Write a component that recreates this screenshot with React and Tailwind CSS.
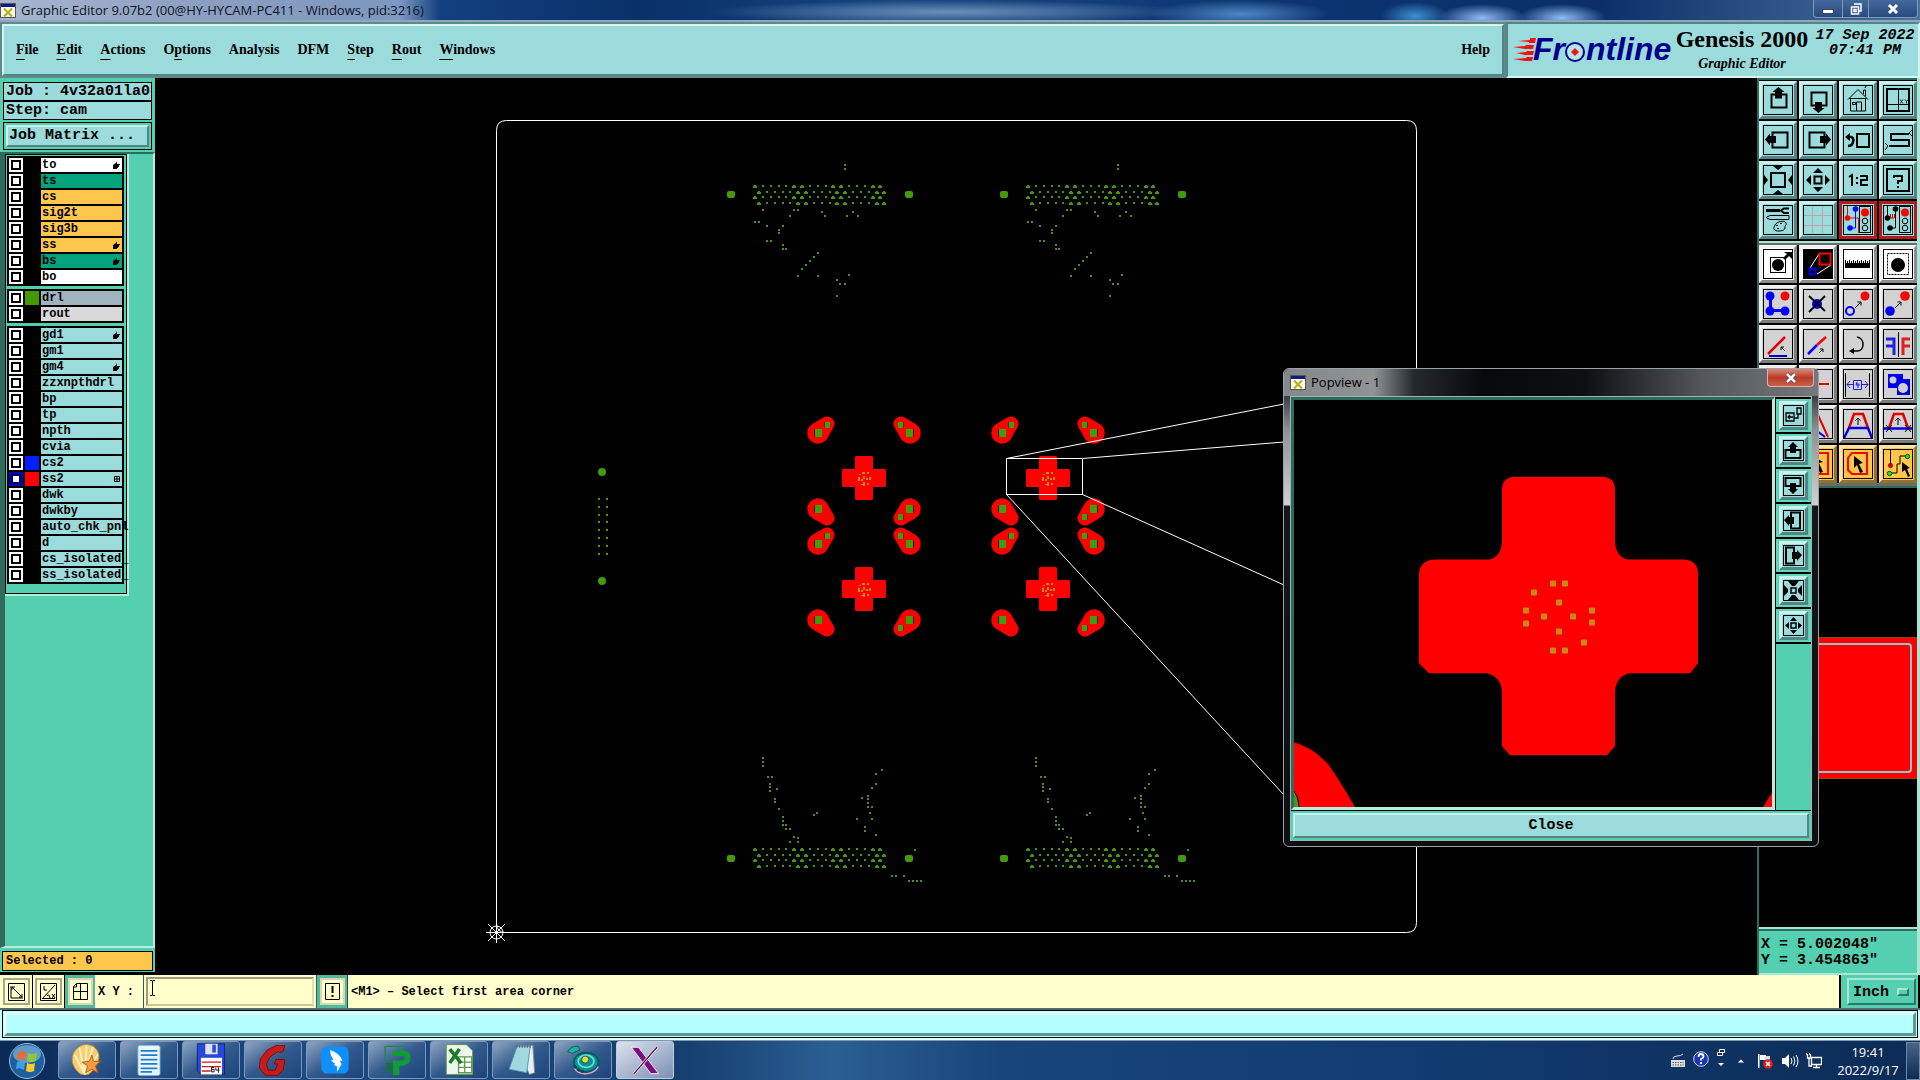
import React from "react";

const MONO = "font-['Liberation_Mono',monospace] font-bold";
const SERIF = "font-['Liberation_Serif',serif] font-bold";
const UI = "font-['Open_Sans',sans-serif]";

/* ---------- toolbar glyphs, drawn on a 30 x 30 grid ---------- */

const ICONS = {
  panUp: (
    <>
      <rect x="8.500" y="9.500" width="15" height="13" fill="none" stroke="#000" strokeWidth="2" />
      <path d="M15.500 2l6 5h-2.500v6.500h-7V7H9.500z" />
    </>
  ),
  panDown: (
    <>
      <rect x="8.500" y="7.500" width="15" height="13" fill="none" stroke="#000" strokeWidth="2" />
      <path d="M15.500 28l6-5h-2.500v-6h-7v6H9.500z" />
    </>
  ),
  home: (
    <g fill="none" stroke="#000">
      <path d="M5 14.500L15 4.500l10 10M7.500 13v13h15V13M6.500 13.500h17M13.500 26v-9h5v9M9.500 17.500h3v2h-3zM20.500 9V5h2v6M22 3l1-2" />
    </g>
  ),
  gridXY: (
    <>
      <rect x="4" y="4" width="22" height="22" fill="none" stroke="#000" strokeWidth="2" />
      <path d="M15.500 4v22M4 19.500h22" stroke="#000" />
      <path d="M17 14.500l3 4m0-4l-3 4M22 14.500l1.500 2 1.500-2m-1.500 2v2" fill="none" stroke="#000" strokeWidth=".8" />
    </>
  ),
  panLeft: (
    <>
      <rect x="9.500" y="7.500" width="15" height="15" fill="none" stroke="#000" strokeWidth="2" />
      <path d="M2 14.500l5-6v2.500h6v7H7v2.500z" />
    </>
  ),
  panRight: (
    <>
      <rect x="6.500" y="7.500" width="15" height="15" fill="none" stroke="#000" strokeWidth="2" />
      <path d="M28 14.500l-5-6v2.500h-6v7h6v2.500z" />
    </>
  ),
  previous: (
    <>
      <rect x="14" y="9" width="12" height="13" fill="none" stroke="#000" strokeWidth="2" />
      <path d="M5 12c5-1 6 2 5 5-.5 3-3 4-5 4" fill="none" stroke="#000" strokeWidth="2.500" />
      <path d="M2 12l5-4v8z" />
    </>
  ),
  serpentine: (
    <>
      <path d="M26 8H8v6h18v6H6" fill="none" stroke="#000" strokeWidth="2" transform="translate(0 1)" />
      <path d="M29 5l-3 3 3 3M2 18l3 3-3 4" fill="none" stroke="#000" />
    </>
  ),
  zoomOut: (
    <>
      <rect x="8" y="8" width="14" height="14" fill="none" stroke="#000" strokeWidth="2" />
      <path d="M10 1h10l-5 4zM10 29h10l-5-4zM1 10v10l4-5zM29 10v10l-4-5z" />
    </>
  ),
  zoomIn: (
    <>
      <rect x="11.500" y="11.500" width="7" height="7" fill="none" stroke="#000" strokeWidth="2" />
      <path d="M10 8h10l-5-5zM10 22h10l-5 5zM8 10v10l-5-5zM22 10v10l5-5z" />
    </>
  ),
  ratio: (
    <path d="M6 12l3-2v11M14 12v2m0 3v2M17 11h7v4h-6v5h7" fill="none" stroke="#000" strokeWidth="2" />
  ),
  help: (
    <>
      <rect x="4" y="4" width="22" height="22" fill="none" stroke="#000" strokeWidth="2" />
      <path d="M11 13v-2h8v5h-4v3m0 2v2" fill="none" stroke="#000" strokeWidth="2" />
    </>
  ),
  tools: (
    <>
      <path d="M3 4h14v3H3z" />
      <path d="M26 3.500h-5l-3 2 3 2.500h5" fill="none" stroke="#000" strokeWidth="2" />
      <path d="M3 12.500l4-2h19v4H7zM12 20c2-4 10-5 11-2 1 2-2 3-1 5 0 3-8 4-10 2-2-1-1-3 0-5z" fill="none" stroke="#000" />
      <path d="M13 20h2v1h-2zM17 18h2v1h-2zM14 23h2v1h-2z" />
    </>
  ),
  grid: <path d="M9.500 0v30M19.500 0v30M0 10.500h30M0 20.500h30" stroke="#bba5a8" />,
  netRed: (
    <>
      <path d="M4.500 1v12h11v15" fill="none" stroke="#f00" />
      <path d="M12.500 4v19h-5" fill="none" stroke="#00f" />
      <circle cx="4.500" cy="13" r="2.800" fill="#f00" />
      <circle cx="12.500" cy="4" r="2.800" fill="#00f" />
      <circle cx="7" cy="23" r="2.800" fill="#00f" />
      <rect x="16.500" y="1.500" width="11" height="26" fill="#9cdbdb" stroke="#000" />
      <circle cx="22" cy="7.500" r="4" fill="#f00" />
      <circle cx="22" cy="16" r="2.800" fill="none" stroke="#000" />
      <circle cx="22" cy="23" r="2.800" fill="none" stroke="#000" />
    </>
  ),
  netBlack: (
    <>
      <path d="M4.500 1v12M12.500 4v19h-5" fill="none" stroke="#000" />
      <path d="M6 13h5M7.500 9v4M9.500 9v4M11.500 9v4" fill="none" stroke="#d00" />
      <circle cx="4.500" cy="13" r="2.800" />
      <circle cx="12.500" cy="4" r="2.800" />
      <circle cx="7" cy="23" r="2.800" />
      <rect x="16.500" y="1.500" width="11" height="26" fill="#9cdbdb" stroke="#000" />
      <circle cx="22" cy="7.500" r="4" fill="#f00" />
      <circle cx="22" cy="16" r="2.800" fill="none" stroke="#000" />
      <circle cx="22" cy="23" r="2.800" fill="none" stroke="#000" />
    </>
  ),
  padSelect: (
    <>
      <rect x="7.500" y="8.500" width="15" height="15" fill="none" stroke="#000" />
      <circle cx="15" cy="16" r="6" />
      <path d="M20 9l4-4-3-2h8v7l-3-3-4 4z" />
    </>
  ),
  areaZoom: (
    <>
      <rect width="30" height="30" />
      <path d="M7 19l9-14M14 25l14-9" stroke="#fff" />
      <rect x="16.500" y="4.500" width="11" height="11" fill="none" stroke="#f00" strokeWidth="2" />
      <rect x="6.500" y="19.500" width="6" height="6" fill="none" stroke="#00f" strokeWidth="2" />
    </>
  ),
  ruler: (
    <>
      <path d="M2 14h25v5H2z" />
      <path d="M2.500 11v4M4.500 12v3M6.500 11v4M8.500 12v3M10.500 11v4M12.500 12v3M14.500 11v4M16.500 12v3M18.500 11v4M20.500 12v3M22.500 11v4M24.500 12v3M26.500 11v4" stroke="#000" />
    </>
  ),
  dashedPad: (
    <>
      <rect x="4.500" y="4.500" width="21" height="21" fill="none" stroke="#000" strokeDasharray="2 1" />
      <circle cx="15" cy="16" r="7" />
    </>
  ),
  fourPads: (
    <g fill="#00f">
      <circle cx="7" cy="7" r="4.500" />
      <circle cx="7" cy="22" r="4.500" />
      <circle cx="22" cy="22" r="4.500" />
      <circle cx="22" cy="7" r="4.500" fill="#f00" />
      <path d="M6 7h3v13h12v3H6z" />
    </g>
  ),
  deletePad: (
    <>
      <circle cx="14" cy="15" r="5" fill="#0000e0" />
      <path d="M6 7l16 15M22 7L6 23" stroke="#000" strokeWidth="1.800" />
    </>
  ),
  copyPad: (
    <>
      <circle cx="7" cy="22" r="4" fill="none" stroke="#00f" strokeWidth="2" />
      <circle cx="22" cy="7" r="4.500" fill="#f00" />
      <path d="M12 19l6-6M14.500 13h3.500v3.500" fill="none" stroke="#000" />
    </>
  ),
  movePad: (
    <>
      <circle cx="7" cy="22" r="4.800" fill="#00f" />
      <circle cx="22" cy="7" r="4.800" fill="#f00" />
      <path d="M12 19l6-6M14.500 13h3.500v3.500" fill="none" stroke="#000" />
    </>
  ),
  angle: (
    <>
      <path d="M6 27h18" stroke="#0000d0" strokeWidth="2" />
      <path d="M5 25L22 8" stroke="#e00000" strokeWidth="2.500" />
      <path d="M22 22l-4-4m0 3v-3h3" fill="none" stroke="#000" />
    </>
  ),
  stretch: (
    <>
      <path d="M5 25l9-9" stroke="#00f" strokeWidth="2.500" />
      <path d="M14 16l9-8" stroke="#f00" strokeWidth="2.500" />
      <path d="M16 24l4-4m-3 0h3v3" fill="none" stroke="#000" />
    </>
  ),
  rotate: (
    <>
      <path d="M14 8c8 1 8 14 0 14h-4" fill="none" stroke="#000" strokeWidth="1.500" />
      <path d="M6 22l5-3v6z" />
    </>
  ),
  mirror: (
    <>
      <path d="M3 10h8v16M3 17h8" fill="none" stroke="#2020e0" strokeWidth="3" />
      <path d="M27 10h-7v16M27 17h-7" fill="none" stroke="#e02020" strokeWidth="3" />
      <path d="M15.500 3v25" stroke="#000" />
    </>
  ),
  breakLine: (
    <path d="M4 15h22" stroke="#e00000" strokeWidth="2" />
  ),
  spacing: (
    <>
      <path d="M2.500 4v24M26.500 4v24" stroke="#000" />
      <path d="M4 15.500h6M19 15.500h6M7 12l-3 3.500L7 19M22 12l3 3.500-3 3.500M10.500 11.500h8v9h-8zM14 13l-1 3h4m-2-2v5" fill="none" stroke="#2020e0" />
    </>
  ),
  merge: (
    <>
      <path d="M5 5h15v5h7v16H14v-7H5z" fill="#0000f0" />
      <circle cx="10" cy="11" r="3.500" fill="#d0d0d0" />
      <circle cx="20" cy="19" r="5" fill="#d0d0d0" />
    </>
  ),
  slopeA: (
    <>
      <path d="M2 28l7-22h6l10 22" fill="none" stroke="#e00000" strokeWidth="2" />
      <path d="M2 19h8l12 9" fill="none" stroke="#0000d0" strokeWidth="2" />
    </>
  ),
  slopeB: (
    <>
      <path d="M6 19l5-14h9l5 14" fill="none" stroke="#e00000" strokeWidth="2.500" />
      <path d="M1 29l5-10h19l4 10" fill="none" stroke="#0000e0" strokeWidth="2.500" />
      <path d="M15 16V9m-2.500 2.500L15 9l2.500 2.500" fill="none" stroke="#000" />
    </>
  ),
  slopeC: (
    <>
      <path d="M6 19l5-14h9l5 14" fill="none" stroke="#e00000" strokeWidth="2.500" />
      <path d="M1 19.500h28" stroke="#0000e0" strokeWidth="2.500" />
      <path d="M15 16V9m-2.500 2.500L15 9l2.500 2.500M3 16l6 7m0-7l-6 7M22 16l6 7m0-7l-6 7" fill="none" stroke="#000" />
    </>
  ),
  pickRect: (
    <>
      <rect x="5" y="4" width="20" height="21" fill="none" stroke="#f00" strokeWidth="2" />
      <path d="M10 7l10 6-4 1 4 9-3 1-4-9-3 3z" />
    </>
  ),
  pickPoly: (
    <>
      <path d="M9 4h15v21H9l-4-4V9z" fill="none" stroke="#f00" strokeWidth="2" />
      <path d="M11 7l9 7-4 1 4 8-3 1-3-8-3 3z" />
    </>
  ),
  pickNet: (
    <>
      <path d="M7.500 1v16M8 24h6v-9h3V7h6" fill="none" stroke="#000" />
      <circle cx="7.500" cy="16.500" r="2.200" fill="#d00000" stroke="#600" strokeWidth=".5" />
      <circle cx="6.500" cy="24.500" r="2.200" fill="#20e020" stroke="#050" />
      <circle cx="24.500" cy="7.500" r="2.200" fill="#20e020" stroke="#050" />
      <path d="M19 13l8 6-3 1 3 7-2 1-3-7-3 2z" />
    </>
  ),
};

const TONES = {
  aqua: "bg-[#9cdbdb] border-t-[#c9f1ee] border-l-[#c9f1ee] border-r-[#528585] border-b-[#528585]",
  red: "bg-[#9cdbdb] border-[#b01c1c]",
  white: "bg-white border-t-[#f4f4f4] border-l-[#f4f4f4] border-r-[#8c8c8c] border-b-[#8c8c8c]",
  gray: "bg-[#d2d2d2] border-t-[#efefef] border-l-[#efefef] border-r-[#7b7b7b] border-b-[#7b7b7b]",
  amber: "bg-[#ffc64d] border-t-[#ffe2a4] border-l-[#ffe2a4] border-r-[#94702b] border-b-[#94702b]",
};

function ToolButton({ icon, tone }) {
  return (
    <button type="button" aria-label={icon} className={`grid h-[38px] w-full place-items-center border-[3px] ${TONES[tone]}`}>
      <svg viewBox="0 0 30 30" className="h-[30px] w-[30px]">
        {ICONS[icon]}
        <rect x=".5" y=".5" width="29" height="29" fill="none" stroke="#000" />
      </svg>
    </button>
  );
}

const VIEW_TOOLS = [
  ["panUp", "aqua"], ["panDown", "aqua"], ["home", "aqua"], ["gridXY", "aqua"],
  ["panLeft", "aqua"], ["panRight", "aqua"], ["previous", "aqua"], ["serpentine", "aqua"],
  ["zoomOut", "aqua"], ["zoomIn", "aqua"], ["ratio", "aqua"], ["help", "aqua"],
  ["tools", "aqua"], ["grid", "aqua"], ["netRed", "red"], ["netBlack", "red"],
];
const EDIT_TOOLS = [
  ["padSelect", "white"], ["areaZoom", "white"], ["ruler", "white"], ["dashedPad", "white"],
  ["fourPads", "gray"], ["deletePad", "gray"], ["copyPad", "gray"], ["movePad", "gray"],
  ["angle", "gray"], ["stretch", "gray"], ["rotate", "gray"], ["mirror", "gray"],
  ["breakLine", "gray"], ["breakLine", "gray"], ["spacing", "gray"], ["merge", "gray"],
  ["slopeA", "gray"], ["slopeA", "gray"], ["slopeB", "gray"], ["slopeC", "gray"],
  ["pickRect", "amber"], ["pickRect", "amber"], ["pickPoly", "amber"], ["pickNet", "amber"],
];

/* ---------- window chrome ---------- */

function XIcon() {
  return (
    <svg viewBox="0 0 16 15" className="h-[15px] w-4 shrink-0">
      <rect x=".5" y=".5" width="15" height="14" fill="#fffef0" stroke="#555" />
      <rect x="1" y="1" width="14" height="3" fill="#101c80" />
      <path d="M4 5.500l8 8M12 5.500l-8 8" stroke="#b8b020" strokeWidth="2.200" />
    </svg>
  );
}

function TitleBar() {
  return (
    <header className={`relative flex h-[22px] shrink-0 items-center gap-[5px] border-b-2 border-[#8fa6bd] bg-[#0f3b78] bg-[radial-gradient(ellipse_34px_14px_at_1415px_16px,#3d8fd0,transparent),radial-gradient(ellipse_44px_14px_at_1482px_18px,#8fbcf5,transparent),radial-gradient(ellipse_44px_14px_at_1562px_18px,#8fbcf5,transparent),radial-gradient(ellipse_240px_12px_at_950px_12px,#6b8fb8,transparent),radial-gradient(ellipse_90px_14px_at_1240px_14px,#4f86c4,transparent),linear-gradient(90deg,#a8b6cf_0,#8c9fc0_200px,#7d97c0_400px,#12407f_440px,#0a3068_640px,#174680_900px,#0c3470_1300px,#0b3068_1600px,#4a70a0_1920px)] text-[13px] leading-[20px] text-[#0c1424] ${UI}`}>
      <XIcon />
      <h1>Graphic Editor 9.07b2 (00@HY-HYCAM-PC411 - Windows, pid:3216)</h1>
      <div className="mr-[2px] ml-auto flex h-[18px] self-start rounded-b border border-t-0 border-[#7f98b8] bg-gradient-to-b from-[#45689a] to-[#274c80]">
        <button type="button" aria-label="Minimize" className="grid w-[29px] place-items-center border-r border-[#7f98b8]">
          <svg viewBox="0 0 12 12" className="h-3 w-3"><rect x=".5" y="6.500" width="11" height="4" fill="#fff" stroke="#445" /></svg>
        </button>
        <button type="button" aria-label="Restore" className="grid w-[26px] place-items-center border-r border-[#7f98b8]">
          <svg viewBox="0 0 12 12" className="h-3 w-3"><path d="M4 1h7v7h-2M1.500 4h7v7h-7zM4 6.500h2v2H4z" fill="none" stroke="#fff" strokeWidth="1.500" /></svg>
        </button>
        <button type="button" aria-label="Close" className="grid w-[48px] place-items-center">
          <svg viewBox="0 0 12 12" className="h-3 w-3"><path d="M2 2l8 8M10 2l-8 8" stroke="#fff" strokeWidth="3" /></svg>
        </button>
      </div>
    </header>
  );
}

function FrontlineLogo() {
  return (
    <svg viewBox="0 -8 164 44" className="h-[44px] w-[164px] shrink-0">
      <path fill="#f01414" d="M5 5l12-1V2l6 0-1 5h-6V6zM0 11l12-1 1-1h8l-1 4h-8zM3 17l10-1 1-1h7l-1 4h-8zM0 23l13-1 1-1h6l-1 4h-7z" />
      <g className="fill-[#00008c] font-['Liberation_Sans',sans-serif] text-[32px] font-bold italic">
        <text x="20" y="24">Fr</text>
        <text x="73" y="24">ntline</text>
      </g>
      <circle cx="62" cy="16" r="9" fill="#b5e6e6" stroke="#00008c" strokeWidth="2" />
      <path d="M62 12l4 4-4 4-4-4z" fill="#f01414" />
    </svg>
  );
}

const MENUS = [["", "F", "ile"], ["", "E", "dit"], ["", "A", "ctions"], ["O", "p", "tions"], ["Analysis", "", ""], ["DFM", "", ""], ["", "S", "tep"], ["", "R", "out"], ["", "W", "indows"]];

function MenuBar() {
  return (
    <div className="flex h-14 shrink-0 bg-[#5f8a8a]">
      <nav className={`m-[2px] mr-0 flex flex-1 items-center gap-[18px] border-2 border-t-[#d5f4f2] border-r-[#528585] border-b-[#528585] border-l-[#d5f4f2] bg-[#9cdbdb] px-3 pb-[2px] text-[14px] text-black ${SERIF}`}>
        {MENUS.map(([a, b, c]) => (
          <button type="button" key={a + b + c}>
            {a}<span className="underline underline-offset-[5px]">{b}</span>{c}
          </button>
        ))}
        <button type="button" className="ml-auto">Help</button>
      </nav>
      <div className="ml-[2px] flex w-[414px] border-2 border-t-[#528585] border-r-[#d5f4f2] border-b-[#d5f4f2] border-l-[#528585] bg-[#9cdbdb] text-black">
        <div className="mt-[4px] ml-[5px]"><FrontlineLogo /></div>
        <div className={`-ml-[5px] w-[140px] shrink-0 pt-[2px] text-center ${SERIF}`}>
          <div className="text-[24px] leading-[26px] whitespace-nowrap">Genesis 2000</div>
          <div className="text-[14px] leading-6 italic">Graphic Editor</div>
        </div>
        <div className={`flex-1 pt-1 text-center text-[15px] leading-[15px] whitespace-nowrap italic ${MONO}`}>
          <div>17 Sep 2022</div>
          <div>07:41 PM</div>
        </div>
      </div>
    </div>
  );
}

/* ---------- layer list ---------- */

const LAYERS = [
  [
    ["to", "bg-white", "hand"], ["ts", "bg-[#00a37c]"], ["cs", "bg-[#ffc64d]"], ["sig2t", "bg-[#ffc64d]"],
    ["sig3b", "bg-[#ffc64d]"], ["ss", "bg-[#ffc64d]", "hand"], ["bs", "bg-[#00a37c]", "hand"], ["bo", "bg-white"],
  ],
  [["drl", "bg-[#9fb4bf]", "", "bg-[#429900]"], ["rout", "bg-[#d9d9d9]"]],
  [
    ["gd1", "bg-[#9cdbdb]", "hand"], ["gm1", "bg-[#9cdbdb]"], ["gm4", "bg-[#9cdbdb]", "hand"], ["zzxnpthdrl", "bg-[#9cdbdb]"],
    ["bp", "bg-[#9cdbdb]"], ["tp", "bg-[#9cdbdb]"], ["npth", "bg-[#9cdbdb]"], ["cvia", "bg-[#9cdbdb]"],
    ["cs2", "bg-[#9cdbdb]", "", "bg-[#001eff]"], ["ss2", "bg-[#9cdbdb]", "table", "bg-[#ff0000]"], ["dwk", "bg-[#9cdbdb]"],
    ["dwkby", "bg-[#9cdbdb]"], ["auto_chk_pnl", "bg-[#9cdbdb]"], ["d", "bg-[#9cdbdb]"],
    ["cs_isolated_", "bg-[#9cdbdb]"], ["ss_isolated_", "bg-[#9cdbdb]"],
  ],
];

function LayerRow({ layer: [name, bg, mark, swatch] }) {
  return (
    <label className="flex h-[14px] gap-[2px]">
      <input type="checkbox" defaultChecked={name === "ss2"} className="h-[14px] w-[14px] shrink-0 appearance-none border-2 border-white bg-white shadow-[inset_0_0_0_2px_#000] checked:border-[#0000b4] checked:shadow-[inset_0_0_0_2px_#00006e]" />
      <span className={`w-[14px] shrink-0 ${swatch || "bg-black"}`} />
      <span className={`flex w-[81px] shrink-0 items-center justify-between pr-[2px] pl-[1px] text-[12px] leading-[14px] whitespace-nowrap text-black ${MONO} ${bg}`}>
        {name}
        {mark === "hand" && (
          <svg viewBox="0 0 8 8" className="h-2 w-2 shrink-0"><path d="M1 4l3-2 1-2v3h3v1H7v2H6v1H5v1H1z" /></svg>
        )}
        {mark === "table" && (
          <svg viewBox="0 0 6 6" className="h-[6px] w-[6px] shrink-0"><path d="M.5.5h5v5h-5zM3 .5v5M.5 3h5" fill="none" stroke="#000" /></svg>
        )}
      </span>
    </label>
  );
}

function LeftPanel() {
  return (
    <aside className={`mb-[3px] flex w-[155px] shrink-0 flex-col bg-[#54cfb0] text-black ${MONO}`}>
      <div className="px-[3px] pt-1 text-[15px] leading-[17px] whitespace-nowrap">
        <div className="border border-black bg-[#9cdbdb] pl-[2px]">Job : 4v32a01la0</div>
        <div className="border border-black bg-[#9cdbdb] pl-[2px]">Step: cam</div>
        <div className="mt-[2px] border border-black p-[2px]">
          <button type="button" className="block w-full border-2 border-t-[#c9f1ee] border-r-[#528585] border-b-[#528585] border-l-[#c9f1ee] bg-[#9cdbdb] pl-[1px] text-left leading-[18px]">Job Matrix ...</button>
        </div>
      </div>
      <div className="mt-[2px] flex-1 border-t-2 border-r-2 border-b-2 border-l-[5px] border-t-[#2f6b5d] border-r-[#b8ecdc] border-b-[#b8ecdc] border-l-[#2f6b5d]">
        <div className="w-[124px] border-r-2 border-b-2 border-[#b8ecdc]">
          <div className="flex flex-col gap-[3px] border border-black bg-[#54cfb0] px-[1px] pt-[1px] pb-[9px]">
            {LAYERS.map((group, i) => (
              <div key={i} className="flex w-[117px] flex-col gap-[2px] bg-black p-[2px]">
                {group.map((layer) => <LayerRow key={layer[0]} layer={layer} />)}
              </div>
            ))}
          </div>
        </div>
      </div>
      <div className="mx-[2px] mt-[3px] mb-[1px] border border-black bg-[#ffc64d] pt-[1px] pl-[3px] text-[12px] leading-[17px]">Selected : 0</div>
    </aside>
  );
}

/* ---------- artwork ---------- */

const TOP_DOTS = [[145, 25], [145, 29], [63, 70], [94, 70], [98, 70], [90, 76], [122, 72], [125, 76], [153, 72], [147, 76], [158, 76], [55, 82], [59, 82], [67, 86], [83, 86], [79, 90], [79, 93], [67, 101], [71, 101], [83, 105], [83, 109], [86, 109], [118, 113], [114, 117], [110, 121], [106, 125], [102, 129], [98, 136], [118, 136], [149, 135], [137, 140], [140, 144], [145, 144], [137, 156]];
const BOTTOM_DOTS = [[63, 18], [63, 22], [63, 26], [68, 37], [72, 37], [70, 44], [70, 47], [70, 51], [77, 49], [75, 59], [75, 62], [79, 69], [83, 77], [83, 81], [83, 85], [86, 85], [86, 89], [90, 89], [94, 97], [98, 98], [98, 102], [90, 102], [114, 75], [117, 73], [182, 30], [176, 34], [176, 44], [172, 48], [162, 58], [168, 56], [168, 59], [168, 63], [168, 67], [172, 67], [170, 73], [172, 79], [157, 79], [165, 87], [165, 91], [176, 95], [215, 110], [192, 136], [196, 136], [204, 136], [209, 141], [213, 141], [217, 141], [221, 141]];
const dotPath = (dots) => dots.map(([x, y]) => `M${x - 1} ${y - 1}h2v2h-2z`).join("");

/* Four staggered rows of seventeen drill hits; some hits are a pixel wider. */
function connector(y) {
  let d = "";
  for (let row = 0; row < 4; row++) {
    for (let i = 0; i < 17; i++) {
      const x = Math.round(54 + (row % 2) * 4 + i * 7.84);
      const cy = y + row * 6 - (row > 1 ? 1 : 0);
      const wide = i % 5 === 0 || (i % 5 === 1 && i > 5);
      d += wide ? `M${x} ${cy - 1}h2v1h1v2h-4v-2h1z` : `M${x} ${cy - 1}h2v2h-2z`;
    }
  }
  return d;
}

function DrillCluster({ x, y, dots, rowY, padY }) {
  return (
    <g transform={`translate(${x} ${y})`} fill="#439a0a">
      <path d={dotPath(dots)} fill="#4f8f22" />
      <path d={connector(rowY)} />
      <rect x="27" y={padY - 3} width="8" height="7" rx="2" />
      <rect x="205" y={padY - 3} width="8" height="7" rx="2" />
    </g>
  );
}

function Blob({ x, y, sx, sy }) {
  return (
    <g transform={`translate(${x} ${y}) scale(${sx} ${sy})`}>
      <path fill="#f00" d="M-5.300-9.300A10.700 10.700 0 1 0 9.300 5.300L15.400-5.400A7.300 7.300 0 0 0 5.400-15.400Z" />
      <rect x="-4" y="-4" width="8" height="8" rx="1" fill="#401000" />
      <rect x="-3" y="-4" width="7" height="8" fill="#439a0a" />
      {!(sx === 1 && sy === -1) && (
        <>
          <rect x="6" y="-11" width="6" height="6" rx="1" fill="#6b1800" />
          <rect x="7" y="-11" width="5" height="6" fill="#439a0a" />
        </>
      )}
    </g>
  );
}

function Cross({ x, y }) {
  return (
    <g transform={`translate(${x} ${y})`}>
      <path fill="#f00" d="M-8-22H8l1 1V-9H21l1 1V8l-1 1H9V21l-1 1H-8l-1-1V9h-12l-1-1V-8l1-1h12v-12z" />
      <path fill="#d98a10" d="M-2-6h3v2h-3zM3-6h2v2H3zM-6-1h2v4h-2zM-1-2h2v3h-2zM5-1h2v3H5zM2 0h2v2H2zM-3 1h2v2h-2zM-1 4h2v4h-2zM3 5h2v2H3zM-5-4h2v1h-2zM-3 6h2v1h-2z" />
    </g>
  );
}

function Canvas() {
  const sideDots = [499, 507, 515, 522, 530, 538, 546, 554];
  return (
    <svg viewBox="155 78 1602 897" preserveAspectRatio="xMinYMin meet" className="min-w-0 flex-1 bg-black">
      <path d="M496.500 924V130.500q0-10 10-10H1406.500q10 0 10 10V922.500q0 10-10 10H505q-8 0-8.500-9" fill="none" stroke="#fff" />
      <g stroke="#fff" fill="none">
        <circle cx="496.500" cy="932.500" r="6.500" />
        <path d="M486 932.500h20M496.500 923v20M488 924l17 17M505 924l-17 17" />
      </g>
      <g fill="#439a0a">
        <circle cx="602" cy="472" r="4" />
        <circle cx="602" cy="581" r="4" />
        <path d={dotPath(sideDots.flatMap((y) => [[599, y], [607, y]]))} />
      </g>
      {[700, 973].map((x) => (
        <g key={x}>
          <DrillCluster x={x} y={140} dots={TOP_DOTS} rowY={46} padY={54} />
          <DrillCluster x={x} y={740} dots={BOTTOM_DOTS} rowY={109} padY={118} />
        </g>
      ))}
      {[0, 184].map((dx) => (
        <g key={dx}>
          {[[433, 1], [509, -1], [544, 1], [620, -1]].map(([y, sy]) => (
            <g key={y}>
              <Blob x={818 + dx} y={y} sx={1} sy={sy} />
              <Blob x={910 + dx} y={y} sx={-1} sy={sy} />
            </g>
          ))}
          <Cross x={864 + dx} y={478} />
          <Cross x={864 + dx} y={589} />
        </g>
      ))}
      <path d="M1006.500 458.500h76v36h-76zM1006.500 458.500L1284 404M1082.500 458.500L1284 442M1082.500 494.500L1284 585M1006.500 494.500L1284 795" fill="none" stroke="#fff" />
    </svg>
  );
}

/* ---------- right column ---------- */

function RightPanel() {
  return (
    <aside className="flex w-[163px] shrink-0 flex-col border-r-[3px] border-l-2 border-r-[#a9e6d6] border-l-[#2f6b5d] bg-black">
      <div className="grid grid-cols-4 gap-[2px] border-t-2 border-b-2 border-t-[#2f6b5d] border-b-[#a9e6d6] bg-black pt-[1px] pb-[2px]">
        {VIEW_TOOLS.map(([icon, tone], i) => <ToolButton key={i} icon={icon} tone={tone} />)}
      </div>
      <div className="grid grid-cols-4 gap-[2px] border-t-2 border-b-[3px] border-[#6b6b6b] bg-black">
        {EDIT_TOOLS.map(([icon, tone], i) => <ToolButton key={i} icon={icon} tone={tone} />)}
      </div>
      <div className="flex-1 border-t-2 border-b-2 border-t-[#2f6b5d] border-b-[#a9e6d6] pt-[149px]">
        <div className="h-[142px] border-y border-[#8a4a00] bg-[#ff0000] p-[5px]">
          <div className="h-full rounded-sm border-2 border-[#8fc4c8]" />
        </div>
      </div>
      <div className={`border-t-2 border-b-2 border-t-[#2f6b5d] border-b-[#a9e6d6] bg-[#54cfb0] pt-[6px] pb-[4px] pl-[2px] text-[15px] leading-[16px] whitespace-pre text-black ${MONO}`}>
        <div>X = 5.002048"</div>
        <div>Y = 3.454863"</div>
      </div>
    </aside>
  );
}

/* ---------- popup window ---------- */

const POP_ICONS = {
  Detach: <path d="M3 8h8v8H3zM5 12h5M7 10l-2 2 2 2M14 3h4v6h-4zM11 13h4V9" fill="none" stroke="#000" strokeWidth="1.300" />,
  Up: <><path d="M2.500 10v8h15v-8H2.500z" fill="none" stroke="#000" strokeWidth="2" /><path d="M10 2l5 5h-2v6H7V7H5z" /></>,
  Down: <><path d="M2.500 3h15v8h-15z" fill="none" stroke="#000" strokeWidth="2" /><path d="M10 19l5-5h-2V8H7v6H5z" /></>,
  Left: <><path d="M8 2.500h9v16H8z" fill="none" stroke="#000" strokeWidth="2" /><path d="M1 10l5-5v2h5v7H6v2z" /></>,
  Right: <><path d="M3 2.500h8v16H3z" fill="none" stroke="#000" strokeWidth="2" /><path d="M19 10l-5-5v2H9v7h5v2z" /></>,
  Out: <><path d="M8 8h5v5H8z" fill="none" stroke="#000" strokeWidth="1.500" /><path d="M5 1h11l-4 5H9zM5 20h11l-4-5H9zM1 5v11l4-4V9zM19 5v11l-4-4V9z" /></>,
  In: <><path d="M8 8h5v5H8z" fill="none" stroke="#000" strokeWidth="1.500" /><path d="M7 6h7l-3.500-4zM7 15h7l-3.500 4zM6 7v7l-4-3.500zM15 7v7l4-3.500z" /></>,
};

const POP_DOTS = [[1553, 584], [1565, 584], [1534, 593], [1559, 603], [1526, 611], [1592, 611], [1544, 617], [1573, 617], [1526, 624], [1592, 623], [1559, 632], [1584, 643], [1553, 651], [1565, 651]];

function Popview() {
  return (
    <section className="absolute top-[368px] right-[101px] flex h-[479px] w-[536px] flex-col rounded-md border border-[#9aa2aa] bg-[linear-gradient(180deg,#55595d_0,#3c4045_28px,#8e9194_60px,#cfd1d3_136px,#14171a_137px,#0c0e10_100%)] px-[6px] pb-[5px]">
      <div className={`-mx-[6px] flex h-[27px] shrink-0 items-center gap-[5px] rounded-t-md bg-[linear-gradient(90deg,#85888b_0,#909396_90px,#26292c_130px,#07090b_200px,#0d0f11_300px,#55585b_420px,#76797c_536px)] pl-[6px] text-[13px] leading-[20px] text-black ${UI}`}>
        <XIcon />
        <h2 className="pb-[2px]">Popview - 1</h2>
        <button type="button" aria-label="Close window" className="mr-[4px] ml-auto grid h-[18px] w-[47px] place-items-center self-start rounded-b border border-t-0 border-[#e0b0a8] bg-gradient-to-b from-[#d98878] via-[#b83a28] to-[#c8604a]">
          <svg viewBox="0 0 12 12" className="h-3 w-3"><path d="M2 2l8 8M10 2l-8 8" stroke="#444" strokeWidth="4" /><path d="M2 2l8 8M10 2l-8 8" stroke="#fff" strokeWidth="2.500" /></svg>
        </button>
      </div>
      <div className="flex min-h-0 flex-1 flex-col border border-[#a0b4b0] bg-black">
        <div className="flex min-h-0 flex-1 gap-[1px]">
          <div className="min-w-0 flex-1 border-[3px] border-t-[#2f6b5d] border-r-[#b8ecdc] border-b-[#b8ecdc] border-l-[#2f6b5d] bg-black">
            <svg viewBox="1294 400 478 408" preserveAspectRatio="none" className="block h-full w-full">
              <path fill="#f00" d="M1514 477H1603q12 1 12 13V540q0 17 13 20H1684q14 1 14 14V664l-8 10H1629q-14 4-14 20V747l-8 9H1510l-8-9V694q0-16-15-20H1429l-10-10V574q1-13 15-14H1489q13-3 13-20V490q0-12 12-13z" />
              {POP_DOTS.map(([x, y]) => <rect key={`${x}-${y}`} x={x - 3} y={y - 3} width="6" height="6" rx="1" fill="#c98a14" />)}
              <path fill="#f00" d="M1294 743q19 5 34 22 12 17 27 43h-61zM1772 794v14h-9z" />
              <path fill="#439a0a" stroke="#000" d="M1293 791q6 7 6 18h-6z" />
            </svg>
          </div>
          <div className="flex w-[35px] shrink-0 flex-col gap-[2px] pt-[2px]">
            {Object.entries(POP_ICONS).map(([name, art]) => (
              <button type="button" key={name} aria-label={name} className="grid h-[33px] shrink-0 place-items-center border-2 border-[#66d6bb] bg-[#54cfb0]">
                <span className="grid h-[29px] w-[29px] place-items-center border-[3px] border-t-[#c9f1ee] border-r-[#528585] border-b-[#528585] border-l-[#c9f1ee] bg-[#9cdbdb]">
                  <svg viewBox="0 0 21 21" className="h-[21px] w-[21px]">
                    {art}
                    <rect x=".5" y=".5" width="20" height="20" fill="none" stroke="#000" />
                  </svg>
                </span>
              </button>
            ))}
            <div className="flex-1 bg-[#54cfb0]" />
          </div>
        </div>
        <div className="mt-[1px] bg-[#54cfb0] p-[2px]">
          <button type="button" className={`block w-full border-2 border-t-[#c9f1ee] border-r-[#528585] border-b-[#528585] border-l-[#c9f1ee] bg-[#9cdbdb] text-[15px] leading-[21px] text-black ${MONO}`}>Close</button>
        </div>
      </div>
    </section>
  );
}

/* ---------- bottom bars ---------- */

function EntryBar() {
  return (
    <div className={`flex h-[33px] shrink-0 bg-[#ffffcc] text-[12px] text-black ${MONO}`}>
      <button type="button" aria-label="Snap corner" className="grid w-[33px] place-items-center border-r border-black">
        <svg viewBox="0 0 27 27" className="h-[27px] w-[27px]" fill="none" stroke="#000">
          <rect x="1" y="1" width="25" height="25" stroke="#a8a88c" strokeWidth="2" />
          <path d="M5.500 5.500h16v17h-16zM8 8v12h12M9 9l10 10M9 12V9h3M16 19h3v-3" />
        </svg>
      </button>
      <button type="button" aria-label="Snap angle" className="grid w-[32px] place-items-center border-r border-black">
        <svg viewBox="0 0 27 27" className="h-[27px] w-[27px]" fill="none" stroke="#000">
          <rect x="1" y="1" width="25" height="25" stroke="#a8a88c" strokeWidth="2" />
          <path d="M5.500 5.500h16v17h-16zM7 21L20 7M7 20.500h13M9 8v4h3M12 18q2-3 3 2M17 16l3 4m0-4l-3 4" />
        </svg>
      </button>
      <button type="button" aria-label="Snap grid" className="grid w-[30px] place-items-center bg-[#54b89c]">
        <svg viewBox="0 0 25 27" className="h-[27px] w-[25px]" fill="#ffffcc" stroke="#000">
          <rect x="1" y="1" width="23" height="25" stroke="#d8d8b0" strokeWidth="2" />
          <path d="M5.500 8.500l3-3h11v16h-14zM12.500 6v15M6 13.500h13M8.500 6v3h-3" />
        </svg>
      </button>
      <label htmlFor="xy" className="w-12 shrink-0 self-center pl-[3px] whitespace-nowrap">X Y :</label>
      <div className="relative flex w-[174px] border-x border-[#2c5f53] p-[2px]">
        <input id="xy" type="text" className="w-full border-2 border-t-[#9c9c7c] border-r-[#e2e2b4] border-b-[#c8c89c] border-l-[#9c9c7c] bg-[#ffffcc] px-1 outline-none" />
        <svg viewBox="0 0 7 16" className="absolute top-[5px] left-[5px] h-4 w-[7px]"><path d="M1 .5h2l.5 1 .5-1h2M3.500 1v14M1 15.500h2l.5-1 .5 1h2" fill="none" stroke="#000" /></svg>
      </div>
      <button type="button" aria-label="Messages" className="grid w-[31px] place-items-center border-r border-[#1f5044] bg-[#54b89c]">
        <svg viewBox="0 0 25 27" className="h-[27px] w-[25px]" fill="#ffffcc" stroke="#000">
          <rect x="1" y="1" width="23" height="25" stroke="#d8d8b0" strokeWidth="2" />
          <path d="M5.500 5.500h14v16h-14z" />
          <path d="M12.500 8v7M12.500 17v2" strokeWidth="2" />
        </svg>
      </button>
      <p className="flex-1 self-center pl-[3px]">&lt;M1&gt; – Select first area corner</p>
      <div className="relative w-[81px] border-r-2 border-l-2 border-black bg-[#54cfb0] py-[3px] pr-[2px] pl-[6px]">
        <select aria-label="Units" className="h-full w-full appearance-none border-2 border-t-[#a9e6d6] border-r-[#2f7565] border-b-[#2f7565] border-l-[#a9e6d6] bg-[#54cfb0] pt-[2px] pl-1 text-[15px]">
          <option>Inch</option>
        </select>
        <span className="pointer-events-none absolute top-[13px] right-[9px] h-2 w-3 border-2 border-t-[#a9e6d6] border-r-[#2f7565] border-b-[#2f7565] border-l-[#a9e6d6]" />
      </div>
    </div>
  );
}

function StatusStrip() {
  return (
    <div className="h-8 shrink-0 border-t-2 border-b-2 border-t-[#4f6f6f] border-b-[#e0ffff] bg-[#c8fffa]">
      <div className="mx-[2px] h-full border border-black p-[1px]">
        <div className="h-full border-[3px] border-t-[#d9ffff] border-r-[#5f9696] border-b-[#5f9696] border-l-[#d9ffff] bg-[#b3ffff]" />
      </div>
    </div>
  );
}

const APPS = {
  Shell: (
    <>
      <path d="M14 37C6 32 1 22 5 13 9 5 16 2 22 3c8 1 13 8 12 16-2 8-6 14-12 18z" fill="#f6cf74" stroke="#c08a30" />
      <path d="M18 37L6 14M18 37L12 7M18 37L20 4M18 37l9-31M18 37L33 14" stroke="#fff2c4" strokeWidth="2" />
      <path d="M26 15l2 7 8 0-6 5 3 8-7-4-7 4 2-8-6-4 8-1z" fill="#f49a40" stroke="#b05a10" />
    </>
  ),
  Notes: (
    <>
      <rect x="8" y="4" width="25" height="34" rx="2" fill="#e9f6ff" stroke="#7fc0ea" />
      <path d="M11 10h19M11 15h19M11 20h19M11 25h19M11 30h19M11 34h13" stroke="#1f7cc8" strokeWidth="2" />
    </>
  ),
  Disk: (
    <>
      <path d="M5 2h31v35H9l-4-4z" fill="#2748d8" stroke="#10206a" />
      <rect x="14" y="2" width="14" height="12" fill="#dfe3ea" />
      <rect x="22" y="3" width="4" height="9" fill="#2748d8" />
      <rect x="9" y="18" width="24" height="19" fill="#fff" />
      <path d="M10 23h22M10 28h22M10 33h10" stroke="#c02020" strokeWidth="1.500" />
      <path d="M24 29h-3v5h3v-3h-3M26 29v3h4m-1-3v6" fill="none" stroke="#000" />
    </>
  ),
  G: <path d="M34 4l-2 7-4 1-2-1-9 6-4 8 2 7 8 0 3-7-4 0 2-5h10l-2 12-6 6H12l-7-8 1-11 8-10 10-5z" fill="#c81c1c" stroke="#7a0808" />,
  Wing: (
    <>
      <rect x="5" y="5" width="31" height="31" rx="6" fill="#1090ff" />
      <path d="M15 9q10 3 14 12l-3 1 2 3-5 9v-6l-4-2 2-1-5-4 3-1q-4-4-4-11z" fill="#fff" />
    </>
  ),
  P: (
    <>
      <path d="M7 22V5h23" fill="none" stroke="#1c8a3c" strokeWidth="1.500" />
      <path d="M14 17q1-8 9-8h4q9 1 9 9t-9 9h-4v11h-7V21h9q4 0 4-3t-4-2h-5z" fill="#129a34" />
      <path d="M8 25h7M8 28h7M8 31h7M8 34h7" stroke="#0e7a2c" strokeWidth="2" />
    </>
  ),
  Sheet: (
    <>
      <path d="M6 3h23l7 7v27H6z" fill="#eef6ea" stroke="#5a9a4a" />
      <path d="M20 17h15v18H20zM27 17v18M20 23h15M20 29h15" fill="#fff" stroke="#5a9a4a" strokeWidth="1.500" />
      <path d="M10 8l13 16M21 8L10 24" stroke="#1f7a28" strokeWidth="4" />
    </>
  ),
  Pad: (
    <>
      <path d="M16 4h18l2 31-6 2z" fill="#e9eef2" stroke="#808a90" />
      <path d="M16 5h15l-4 30-20-4z" fill="#9fd8e0" stroke="#4f98a4" />
      <path d="M15 5h18" stroke="#606870" strokeWidth="3" strokeDasharray="1.500 1.500" />
    </>
  ),
  Eye: (
    <>
      <ellipse cx="24" cy="23" rx="14" ry="11" fill="#0c8f94" stroke="#0a5560" strokeWidth="2" />
      <ellipse cx="24" cy="22" rx="9" ry="7" fill="none" stroke="#66e0d8" strokeWidth="2" />
      <circle cx="23" cy="20" r="4" fill="#e8d83a" stroke="#064" />
      <path d="M3 11q4-7 12-6l2 4-9 4z" fill="#18b0a8" stroke="#063" />
      <path d="M11 30q4 7 14 6 9-1 13-8" fill="none" stroke="#e0a8d8" strokeWidth="1.500" />
      <path d="M11 27q4 7 13 7" fill="none" stroke="#0a4048" strokeWidth="3" strokeDasharray="3 2" />
    </>
  ),
  X: (
    <>
      <path d="M5 6h8l23 30h-9z" fill="#7a1080" stroke="#fff" />
      <path d="M34 6L8 36" stroke="#fff" strokeWidth="3" />
      <path d="M34 6L8 36" stroke="#4a0a50" strokeWidth="1.500" />
    </>
  ),
};

function Taskbar() {
  return (
    <footer className={`flex h-10 shrink-0 border-t border-[#7f98b4] bg-[linear-gradient(90deg,#0b2a55_0,#1d4a84_300px,#16406f_690px,#2b5f94_830px,#17457c_1000px,#123c72_1400px,#0c2c56_1920px)] text-[13px] text-white ${UI}`}>
      <button type="button" aria-label="Start" className="grid w-[54px] place-items-center">
        <svg viewBox="0 0 38 38" className="h-[38px] w-[38px]">
          <circle cx="19" cy="19" r="17.500" fill="#1f5f9c" stroke="#8fc0e0" />
          <ellipse cx="19" cy="12" rx="14" ry="9" fill="#7fb4d8" opacity=".7" />
          <path d="M10 11q4-3 8-1l-1 8q-4-2-8 0z" fill="#f06a28" />
          <path d="M20 11q4 2 9 0l-1 8q-5 2-9 0z" fill="#8cc83c" />
          <path d="M9 20q4-2 8 0l-1 8q-4-3-8-1z" fill="#3fa0e8" />
          <path d="M19 21q4 2 8 0l-1 8q-4 2-8 0z" fill="#fcc830" />
        </svg>
      </button>
      <div className="flex gap-1 pl-1">
        {Object.entries(APPS).map(([name, art]) => (
          <button type="button" key={name} aria-label={name} className={`grid h-[38px] w-[58px] place-items-center rounded-[3px] border ${name === "X" ? "border-[#c0d0e2] bg-gradient-to-br from-[#dde3ee] to-[#7d8fb4]" : "border-[#7d97b8] bg-gradient-to-br from-[#8ea5c2] via-[#335a8c] to-[#1c457c]"}`}>
            <svg viewBox="0 0 41 41" className="h-[36px] w-[36px]">{art}</svg>
          </button>
        ))}
      </div>
      <div className="ml-auto flex items-center gap-[7px]">
        <svg viewBox="0 0 16 16" className="h-4 w-4"><path d="M1 7h14v7H1z" fill="#ddd" /><path d="M2.500 9.500h11M2.500 12h11" stroke="#555" strokeDasharray="1.500 1" /><path d="M3 6q0-3 4-3t6-2" fill="none" stroke="#ddd" /></svg>
        <svg viewBox="0 0 16 16" className="mb-1 h-4 w-4"><circle cx="8" cy="8" r="7.300" fill="#1838b8" stroke="#d0d8f0" /><path d="M5.500 6q0-3 2.500-3t2.500 2.500Q10.500 7 8 8v1.500M8 11v2" fill="none" stroke="#fff" strokeWidth="1.800" /></svg>
        <svg viewBox="0 0 10 18" className="mt-2 h-[18px] w-[10px] self-start" fill="none" stroke="#fff"><path d="M3.500 3V.5h5v3h-3M1.500 3.500h5v3h-5z" /><path d="M2 14h6l-3 3z" fill="#fff" stroke="none" /></svg>
        <svg viewBox="0 0 10 6" className="mx-1 h-[6px] w-[8px]"><path d="M1 5l4-4 4 4z" fill="#fff" /></svg>
        <svg viewBox="0 0 18 18" className="h-[18px] w-[18px]"><path d="M2 2h1.500v14H2zM4 3h6v5H4z" fill="#fff" /><path d="M9 4h5v5H9z" fill="#ddd" /><circle cx="12" cy="12" r="4.800" fill="#d82020" /><path d="M10 10l4 4m0-4l-4 4" stroke="#fff" strokeWidth="1.500" /></svg>
        <svg viewBox="0 0 18 16" className="h-4 w-[18px]"><path d="M1 5h3l4-4v14l-4-4H1z" fill="#fff" /><path d="M10 5q2 3 0 6M12.500 3.500q3 4.500 0 9M15 2q4 6 0 12" fill="none" stroke="#fff" /></svg>
        <svg viewBox="0 0 16 16" className="mr-[5px] h-4 w-4"><path d="M5.500 4.500h10v7h-10zM7 14.500h7M10.500 12v2M1.500 1v4h3V1M3 5v8h3M0 1h1m2 0h1" fill="none" stroke="#fff" strokeWidth="1.300" /></svg>
        <time className="w-[68px] text-center leading-[18px]">
          19:41<br />2022/9/17
        </time>
        <button type="button" aria-label="Show desktop" className="-ml-[3px] h-[38px] w-[14px] border border-[#7088a8] bg-gradient-to-b from-[#4a6488] to-[#0e2a52]" />
      </div>
    </footer>
  );
}

export default function App() {
  return (
    <div className="relative flex h-screen flex-col overflow-hidden bg-black">
      <TitleBar />
      <MenuBar />
      <main className="flex min-h-0 flex-1">
        <LeftPanel />
        <Canvas />
        <RightPanel />
      </main>
      <EntryBar />
      <StatusStrip />
      <Taskbar />
      <Popview />
    </div>
  );
}
